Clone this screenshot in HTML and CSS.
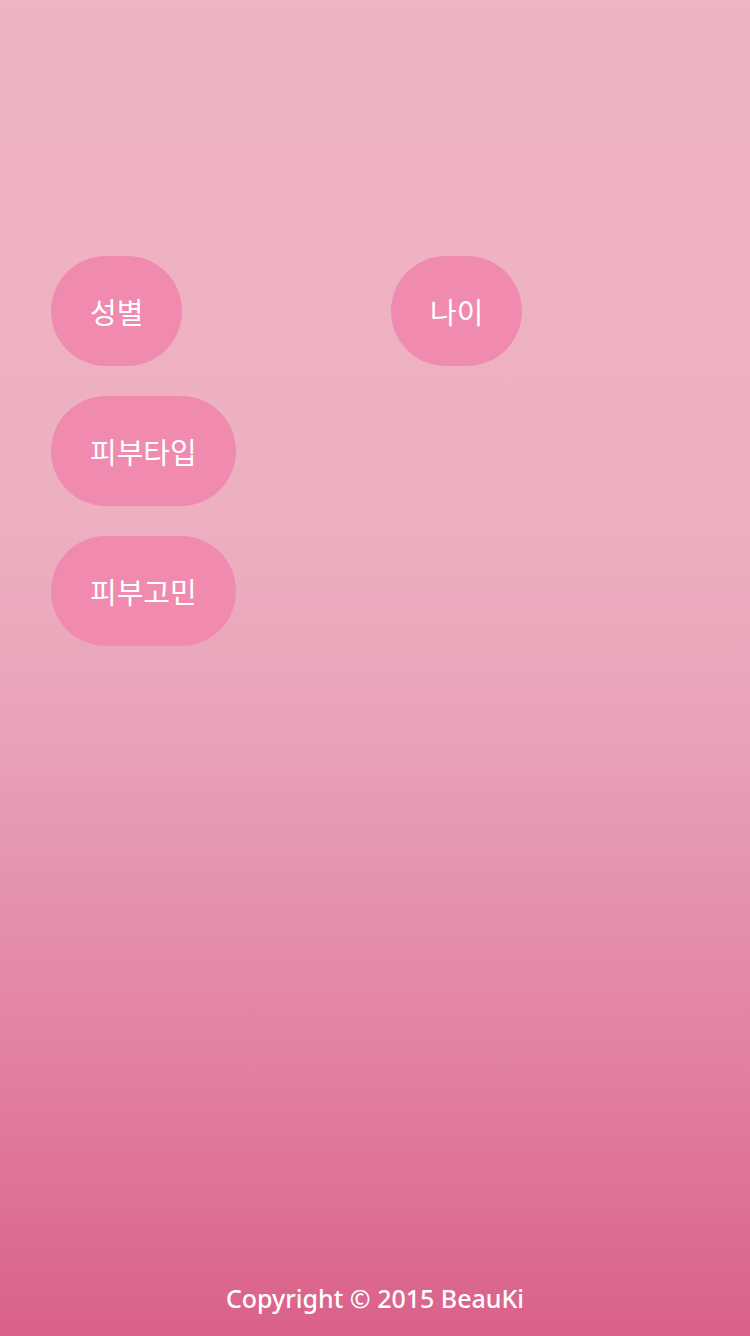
FILE: index.html
```html
<!DOCTYPE html>
<html lang="ko">
<head>
<meta charset="utf-8">
<title>BeauKi</title>
<link rel="stylesheet" href="styles.css">
</head>
<body>
<div class="page">
  <main class="options">
    <button class="pill">성별</button>
    <button class="pill">나이</button>
    <button class="pill">피부타입</button>
    <span></span>
    <button class="pill">피부고민</button>
  </main>
  <footer class="footer">Copyright © 2015 BeauKi</footer>
</div>
</body>
</html>
```

FILE: styles.css
```css
html, body {
  margin: 0;
  padding: 0;
}
body {
  font-family: "Noto Sans", "Noto Sans CJK KR", sans-serif;
}
.page {
  width: 750px;
  height: 1336px;
  display: flex;
  flex-direction: column;
  background: linear-gradient(to bottom, #efb4c4 0%, #edb0c1 38%, #e9a2b8 55%, #e283a2 78%, #da6189 100%);
}
.options {
  flex: 1;
  display: grid;
  grid-template-columns: 340px auto;
  grid-auto-rows: 110px;
  row-gap: 30px;
  justify-items: start;
  align-content: start;
  padding: 256px 0 0 51px;
}
.pill {
  height: 110px;
  padding: 0 39px;
  border: none;
  border-radius: 55px;
  background: #f08aae;
  color: #fff;
  font-family: "Noto Sans CJK KR", sans-serif;
  font-size: 29px;
  font-weight: 400;
  cursor: pointer;
}
.footer {
  text-align: center;
  color: #fff;
  font-family: "Noto Sans", "Open Sans", sans-serif;
  font-size: 25px;
  font-weight: 500;
  padding-bottom: 23px;
  line-height: 30px;
}
```
